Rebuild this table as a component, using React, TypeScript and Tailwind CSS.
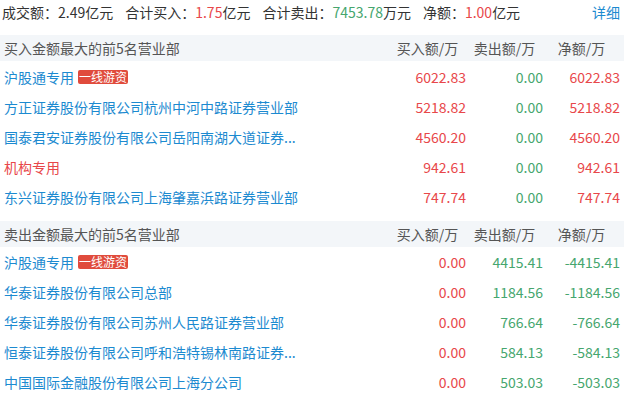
import React from 'react';

interface Row {
  name: string;
  tag?: string;
  nameColor?: 'blue' | 'red';
  buy: string;
  sell: string;
  net: string;
}

// names are shortened the way the source page shows them
const BUY_ROWS: Row[] = [
  { name: '沪股通专用', tag: '一线游资', buy: '6022.83', sell: '0.00', net: '6022.83' },
  { name: '方正证券股份有限公司杭州中河中路证券营业部', buy: '5218.82', sell: '0.00', net: '5218.82' },
  { name: '国泰君安证券股份有限公司岳阳南湖大道证券...', buy: '4560.20', sell: '0.00', net: '4560.20' },
  { name: '机构专用', nameColor: 'red', buy: '942.61', sell: '0.00', net: '942.61' },
  { name: '东兴证券股份有限公司上海肇嘉浜路证券营业部', buy: '747.74', sell: '0.00', net: '747.74' },
];

const SELL_ROWS: Row[] = [
  { name: '沪股通专用', tag: '一线游资', buy: '0.00', sell: '4415.41', net: '-4415.41' },
  { name: '华泰证券股份有限公司总部', buy: '0.00', sell: '1184.56', net: '-1184.56' },
  { name: '华泰证券股份有限公司苏州人民路证券营业部', buy: '0.00', sell: '766.64', net: '-766.64' },
  { name: '恒泰证券股份有限公司呼和浩特锡林南路证券...', buy: '0.00', sell: '584.13', net: '-584.13' },
  { name: '中国国际金融股份有限公司上海分公司', buy: '0.00', sell: '503.03', net: '-503.03' },
];

function SectionHeader({ title }: { title: string }) {
  return (
    <div className="flex items-center h-[26px] bg-[#f3f6f9] text-[#555] pl-[4px] pr-[4px]">
      <div className="flex-1">{title}</div>
      <div className="w-[77px] text-center">买入额/万</div>
      <div className="w-[77px] text-center">卖出额/万</div>
      <div className="w-[77px] text-center">净额/万</div>
    </div>
  );
}

function TableRow({ row, selling }: { row: Row; selling?: boolean }) {
  return (
    <div className="flex items-center h-[30px] pl-[4px] pr-[4px]">
      <div className="flex-1 min-w-0 flex items-center">
        <span className={'whitespace-nowrap ' + (row.nameColor === 'red' ? 'text-[#e8474a]' : 'text-[#1c8ad0]')}>
          {row.name}
        </span>
        {row.tag && (
          <span className="ml-[4px] px-[1px] h-[14px] leading-[14px] text-[12px] text-white bg-[#e04b3c] rounded-[2px]">
            {row.tag}
          </span>
        )}
      </div>
      <div className="w-[77px] text-right text-[#e8474a]">{row.buy}</div>
      <div className="w-[77px] text-right text-[#46a66e]">{row.sell}</div>
      <div className={'w-[77px] text-right ' + (selling ? 'text-[#46a66e]' : 'text-[#e8474a]')}>{row.net}</div>
    </div>
  );
}

export default function App() {
  return (
    <div
      className="w-[624px] h-[396px] bg-white text-[14px] overflow-hidden"
      style={{ fontFamily: '"Noto Sans CJK SC", "Noto Sans", sans-serif' }}
    >
      {/* summary line */}
      <div className="flex items-center h-[24px] pl-[2px] pr-[4px] text-[#333]">
        <span>成交额：2.49亿元</span>
        <span className="ml-[12px]">
          合计买入：<span className="text-[#e8474a]">1.75</span>亿元
        </span>
        <span className="ml-[12px]">
          合计卖出：<span className="text-[#46a66e]">7453.78</span>万元
        </span>
        <span className="ml-[12px]">
          净额：<span className="text-[#e8474a]">1.00</span>亿元
        </span>
        <span className="ml-auto text-[#1c8ad0]">详细</span>
      </div>

      <div className="mt-[11px]">
        <SectionHeader title="买入金额最大的前5名营业部" />
        <div className="pt-[1px]">
          {BUY_ROWS.map((r, i) => (
            <TableRow key={i} row={r} />
          ))}
        </div>
      </div>

      <div className="mt-[9px]">
        <SectionHeader title="卖出金额最大的前5名营业部" />
        {SELL_ROWS.map((r, i) => (
          <TableRow key={i} row={r} selling />
        ))}
      </div>
    </div>
  );
}
